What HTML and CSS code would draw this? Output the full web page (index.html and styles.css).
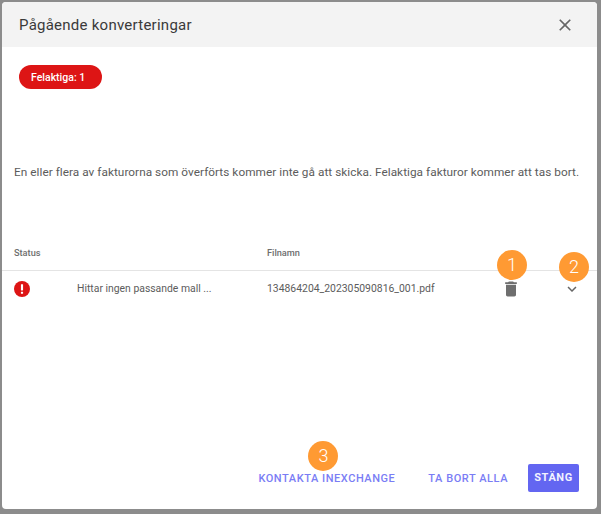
FILE: index.html
```html
<!DOCTYPE html>
<html lang="sv">
<head>
<meta charset="utf-8">
<title>Pågående konverteringar</title>
<link rel="stylesheet" href="styles.css">
</head>
<body>
<div class="dialog">
  <header class="head">
    <h1 class="title">Pågående konverteringar</h1>
    <svg class="close" viewBox="0 0 24 24" width="20" height="20"><path d="M19 6.41 17.59 5 12 10.59 6.41 5 5 6.41 10.59 12 5 17.59 6.41 19 12 13.41 17.59 19 19 17.59 13.41 12z"/></svg>
  </header>
  <div class="chips"><span class="chip">Felaktiga: 1</span></div>
  <p class="msg">En eller flera av fakturorna som överförts kommer inte gå att skicka. Felaktiga fakturor kommer att tas bort.</p>
  <div class="thead">
    <span class="c-status">Status</span>
    <span class="c-file">Filnamn</span>
  </div>
  <div class="row">
    <span class="c-icon">
      <svg viewBox="0 0 24 24" width="16" height="16"><circle cx="12" cy="12" r="12" fill="#dd1515"/><rect x="10.4" y="4.8" width="3.2" height="9.4" rx="0.6" fill="#fff"/><rect x="10.4" y="16" width="3.2" height="3.2" rx="0.6" fill="#fff"/></svg>
    </span>
    <span class="c-msg">Hittar ingen passande mall ...</span>
    <span class="c-name">134864204_202305090816_001.pdf</span>
    <svg class="trash" viewBox="0 0 24 24" width="20" height="20"><path d="M6 19c0 1.1.9 2 2 2h8c1.1 0 2-.9 2-2V7H6v12zM19 4h-3.5l-1-1h-5l-1 1H5v2h14V4z"/></svg>
    <svg class="chev" viewBox="0 0 24 24" width="18" height="18"><path d="M16.59 8.59 12 13.17 7.41 8.59 6 10l6 6 6-6z"/></svg>
    <span class="num n1">1</span>
    <span class="num n2">2</span>
  </div>
  <footer class="foot">
    <span class="contact">KONTAKTA INEXCHANGE<span class="num n3">3</span></span>
    <span class="link">TA BORT ALLA</span>
    <span class="btn">STÄNG</span>
  </footer>
</div>
</body>
</html>
```
FILE: styles.css
```css
html, body { margin: 0; height: 100%; }
body {
  width: 601px;
  height: 514px;
  overflow: hidden;
  background: #8c8c8c;
  font-family: Roboto, sans-serif;
  padding: 2px 4px 5px 2px;
  box-sizing: border-box;
  display: flex;
}
.dialog {
  flex: 1;
  background: #fff;
  border-radius: 4px;
  display: flex;
  flex-direction: column;
  overflow: hidden;
}
.head {
  height: 45px;
  flex: none;
  background: #f3f3f3;
  display: flex;
  align-items: center;
  justify-content: space-between;
  padding: 0 22px 0 17px;
}
.title {
  margin: 0;
  font-size: 15px;
  font-weight: 400;
  letter-spacing: 0.25px;
  color: #3a3a3a;
}
.close { fill: #666; }
.chips { padding: 18px 0 0 17px; height: 24px; flex: none; }
.chip {
  display: inline-flex;
  align-items: center;
  height: 24px;
  width: 83px;
  box-sizing: border-box;
  padding-left: 12px;
  border-radius: 12px;
  background: #dd1515;
  color: #fff;
  font-size: 10.5px;
  font-weight: 500;
}
.msg {
  margin: 75px 0 0 12px;
  font-size: 11.8px;
  line-height: 16px;
  letter-spacing: 0.04px;
  color: #5c5c5c;
  white-space: nowrap;
}
.thead {
  margin-top: 58px;
  height: 33px;
  flex: none;
  box-sizing: border-box;
  padding: 9px 0 0 12px;
  border-bottom: 1px solid #e4e4e4;
  display: flex;
  font-size: 9.2px;
  line-height: 12px;
  font-weight: 500;
  color: #6e6e6e;
}
.c-status { width: 253px; }
.row {
  position: relative;
  height: 35px;
  flex: none;
  display: flex;
  align-items: center;
  padding-left: 12px;
  font-size: 10.4px;
  color: #5c5c5c;
}
.c-icon { width: 63px; display: flex; }
.c-msg { width: 190px; white-space: nowrap; }
.c-name { width: 234px; white-space: nowrap; }
.trash { fill: #6e6e6e; flex: none; margin-right: 42px; }
.chev { fill: #666; flex: none; }
.num {
  position: absolute;
  width: 30px;
  height: 30px;
  border-radius: 50%;
  background: #ff9a33;
  color: #fff;
  font-size: 18px;
  font-weight: 300;
  line-height: 30px;
  text-align: center;
  letter-spacing: 0;
}
.n1 { left: 495px; top: -21px; }
.n2 { left: 557px; top: -19px; }
.foot {
  margin-top: auto;
  padding: 0 18px 17px 0;
  display: flex;
  justify-content: flex-end;
  align-items: center;
  font-size: 11px;
  font-weight: 500;
  letter-spacing: 0.55px;
  color: #7a7df5;
}
.contact { position: relative; margin-right: 33px; white-space: nowrap; }
.n3 { left: 50px; top: -31px; }
.link { margin-right: 20px; white-space: nowrap; }
.btn {
  width: 51px;
  height: 28px;
  line-height: 28px;
  text-align: center;
  background: #6366f1;
  color: #f2f2ff;
  border-radius: 2px;
  font-weight: 700;
}
```
